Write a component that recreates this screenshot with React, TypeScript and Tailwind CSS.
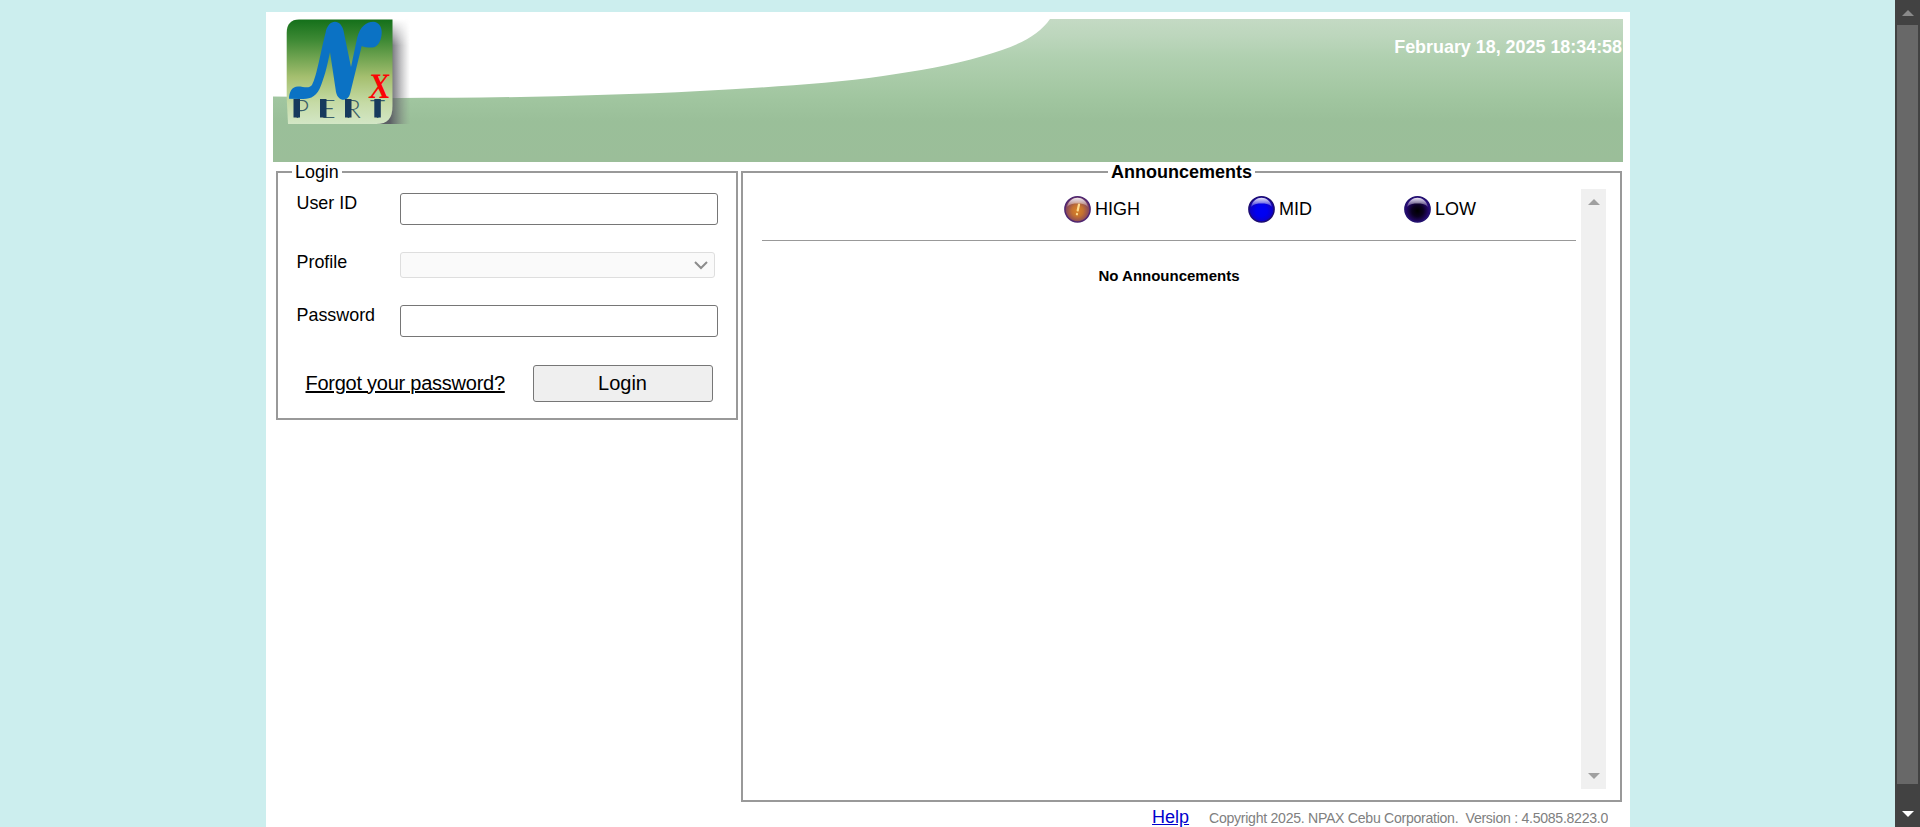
import React from "react";

function Logo() {
  return (
    <svg className="absolute left-[9px] top-0 h-[106px] w-[132px]" viewBox="0 0 132 106" aria-hidden="true">
      <defs>
        <linearGradient id="tile" x1="0" y1="0" x2="0" y2="1">
          <stop offset="0" stopColor="#14701a" />
          <stop offset="0.2" stopColor="#3f8a35" />
          <stop offset="0.55" stopColor="#a5bf6f" />
          <stop offset="0.8" stopColor="#c6dba6" />
          <stop offset="1" stopColor="#d3e6c6" />
        </linearGradient>
        <linearGradient id="shade" gradientUnits="userSpaceOnUse" x1="108" y1="0" x2="128" y2="0">
          <stop offset="0" stopColor="#55555f" stopOpacity="0.9" />
          <stop offset="0.4" stopColor="#66666c" stopOpacity="0.55" />
          <stop offset="1" stopColor="#888888" stopOpacity="0" />
        </linearGradient>
        <linearGradient id="fadeTop" x1="0" y1="0" x2="0" y2="1">
          <stop offset="0" stopColor="#000" />
          <stop offset="0.25" stopColor="#fff" />
        </linearGradient>
        <mask id="shadeMask">
          <rect width="132" height="106" fill="url(#fadeTop)" />
        </mask>
      </defs>
      <path d="M98 0H129V105H94L98 90Z" fill="url(#shade)" mask="url(#shadeMask)" />
      <path d="M17 0.500H110.500V87C110.500 99 106 105 94 105H6L4.700 79V14C4.700 5 9 0.500 17 0.500Z" fill="url(#tile)" />
      <path
        d="M7 79.700C7 73 10 67.500 16 67.500C22 67.500 27 70 30 66C35 57 39 31 43.500 14C46 -1 60 -1 62 14L69 48L75.300 18.300C78 8 84 3 91.300 2.800C97 3 100 8 99.700 14C99.500 21 96 28.500 90 28.500C85 28.500 82 28 79.700 27L68 75C66 83 56 83 54 73L48 33C45 48 42 60 37.500 70C33 79 27 80 18 80Z"
        fill="#0b72c4"
      />
      <text x="93" y="79.500" transform="skewX(-5)" fill="#fb0505" fontSize="36" fontWeight="bold" fontFamily="Liberation Serif, serif" textLength="21" lengthAdjust="spacingAndGlyphs">X</text>
      <g fill="#3a5f68" fontSize="26" fontWeight="300" fontFamily="Lato, sans-serif">
        <text x="12" y="98.500">P</text>
        <text x="38.500" y="98.500">E</text>
        <text x="63" y="98.500">R</text>
        <text x="88" y="98.500">T</text>
      </g>
      <g fill="#173a5d">
        <rect x="11.500" y="80" width="6.500" height="18.500" />
        <rect x="38" y="80" width="6.500" height="18.500" />
        <rect x="63" y="80" width="6.500" height="18.500" />
        <rect x="92.300" y="80" width="6.500" height="18.500" />
      </g>
    </svg>
  );
}

function Banner() {
  return (
    <header className="relative flex h-[143px] w-[1350px] justify-end bg-[linear-gradient(to_bottom,#c4dac4_0px,#bcd6bc_18px,#b0d0b0_38px,#a9cba8_58px,#a1c6a0_78px,#9abf99_102px,#9bbe99_143px)] pr-px">
      <svg className="absolute left-0 top-0 h-[143px] w-[1350px]" viewBox="0 0 1350 143" aria-hidden="true">
        <path d="M0 0H777C765 17 745 27 710 37C677 46.500 645 52 610 57C555 65 490 68.500 427 72C330 77 220 79 125 79L0 77.500Z" fill="#fff" />
      </svg>
      <Logo />
      <span className="relative mt-[18px] text-[17.9px] font-bold leading-5 text-white">February 18, 2025 18:34:58</span>
    </header>
  );
}

function Field({ label, children, className }: { label: string; children: React.ReactNode; className: string }) {
  return (
    <div className={"flex items-start " + className}>
      <label className="w-[103.500px] text-[17.9px] leading-5">{label}</label>
      {children}
    </div>
  );
}

function LoginBox() {
  return (
    <fieldset className="h-[258px] w-[462px] border-2 border-[#999] pl-[14px]">
      <legend className="h-5 px-[3px] text-[17.9px] leading-5">Login</legend>
      <div className="pl-[4.500px] pt-[11px]">
        <Field label="User ID" className="h-[59px]">
          <input className="h-8 w-[318px] rounded-[3px] border border-[#767676] bg-white px-1" />
        </Field>
        <Field label="Profile" className="h-[53px]">
          <button disabled className="flex h-[26px] w-[315px] items-center justify-end rounded-[3px] border border-[#dedede] bg-[#fafafa] pr-[5px]">
            <svg className="h-4 w-4" viewBox="0 0 16 16" fill="none" stroke="#8c8c8c" strokeWidth="2">
              <path d="M2 5L8 11L14 5" />
            </svg>
          </button>
        </Field>
        <Field label="Password" className="h-[60px]">
          <input type="password" className="h-8 w-[318px] rounded-[3px] border border-[#767676] bg-white px-1" />
        </Field>
        <div className="flex h-[37px] items-center pl-[9px]">
          <a href="#" className="w-[227px] pb-[2px] text-[20px] leading-6 tracking-[-0.25px] underline">Forgot your password?</a>
          <button className="h-[37px] w-[180px] rounded-[3px] border border-[#767676] bg-[#efefef] pb-[2px] text-[20px] leading-6">Login</button>
        </div>
      </div>
    </fieldset>
  );
}

function Orb({ kind }: { kind: "high" | "mid" | "low" }) {
  const tones = {
    high: { core: "#d98428", mid: "#c47130", edge: "#7a3f66", ring: "#4f2670" },
    mid: { core: "#0000f4", mid: "#0000f0", edge: "#1200b8", ring: "#1c0c72" },
    low: { core: "#000000", mid: "#0a0020", edge: "#2c0a80", ring: "#22106e" },
  }[kind];
  return (
    <svg className="h-7 w-7" viewBox="0 0 28 28" aria-hidden="true">
      <defs>
        <radialGradient id={"orb-" + kind} cx="0.5" cy="0.56" r="0.5">
          <stop offset="0" stopColor={tones.core} />
          <stop offset="0.45" stopColor={tones.mid} />
          <stop offset="1" stopColor={tones.edge} />
        </radialGradient>
        <linearGradient id={"gloss-" + kind} x1="0" y1="0" x2="0" y2="1">
          <stop offset="0" stopColor="#fff" stopOpacity="0.9" />
          <stop offset="1" stopColor="#fff" stopOpacity="0.15" />
        </linearGradient>
      </defs>
      <circle cx="13.500" cy="14.300" r="12.600" fill={"url(#orb-" + kind + ")"} stroke={tones.ring} strokeWidth="1.500" />
      <path d="M3 12C4.500 5.500 9 2.800 13.500 2.800S22.500 5.500 24 12C21 8.800 17 8.500 13.500 8.500S6 8.800 3 12Z" fill={"url(#gloss-" + kind + ")"} />
      {kind === "high" && (
        <g stroke="#ffdc90" strokeWidth="2.200" strokeLinecap="round">
          <path d="M15 9.500L13.700 15.500" />
          <path d="M13 19L12.900 19.300" />
        </g>
      )}
    </svg>
  );
}

function Level({ kind, label, className }: { kind: "high" | "mid" | "low"; label: string; className: string }) {
  return (
    <div className={"flex items-center gap-[3px] " + className}>
      <Orb kind={kind} />
      <span className="text-[18px] leading-5">{label}</span>
    </div>
  );
}

function Announcements() {
  return (
    <fieldset className="h-[640px] w-[881px] border-2 border-[#999]">
      <legend className="mx-auto h-5 px-[3px] text-[18px] font-bold leading-5">Announcements</legend>
      <div className="flex pl-[19px] pt-[7px]">
        <div className="w-[814px]">
          <div className="flex h-[51px] pl-[302px] pt-[6px]">
            <Level kind="high" label="HIGH" className="h-7 w-[184px]" />
            <Level kind="mid" label="MID" className="h-7 w-[156px]" />
            <Level kind="low" label="LOW" className="h-7" />
          </div>
          <div className="h-px bg-[#999]" />
          <p className="pt-[25px] text-center text-[15px] font-bold leading-5">No Announcements</p>
        </div>
        <div className="ml-[5px] flex h-[600px] w-[25px] flex-col items-center justify-between bg-[#f0f0f0] py-[10px]">
          <svg className="h-[6px] w-3" viewBox="0 0 12 6" fill="#a0a0a0"><path d="M0 6L6 0L12 6Z" /></svg>
          <svg className="h-[6px] w-3" viewBox="0 0 12 6" fill="#a0a0a0"><path d="M0 0L6 6L12 0Z" /></svg>
        </div>
      </div>
    </fieldset>
  );
}

export default function App() {
  return (
    <div className="flex h-[827px] w-[1920px] overflow-hidden bg-[#cceeee] font-['Liberation_Sans',Arial,sans-serif] text-black">
      <div className="flex flex-1 pl-[266px] pt-3">
        <main className="h-[815px] w-[1364px] bg-white pl-[7px] pt-[7px]">
          <Banner />
          <div className="flex items-start gap-[3px] pl-[3px]">
            <LoginBox />
            <Announcements />
          </div>
          <footer className="flex h-[25px] w-[1335px] items-start justify-end gap-[20px] overflow-hidden pt-[5px]">
            <a href="#" className="text-[18px] leading-5 text-[#0000cc] underline">Help</a>
            <span className="whitespace-pre pt-[2px] text-[14.100px] leading-[18px] tracking-[-0.28px] text-[#808080]">{"Copyright 2025. NPAX Cebu Corporation.  Version : 4.5085.8223.0"}</span>
          </footer>
        </main>
      </div>
      <div className="flex h-full w-[25px] flex-col items-center bg-[#424242]">
        <div className="flex h-[25px] items-center"><svg className="h-[6px] w-3" viewBox="0 0 12 6" fill="#8a8a8a"><path d="M0 6L6 0L12 6Z" /></svg></div>
        <div className="h-[759px] w-[21px] bg-[#686868]" />
        <svg className="mt-[27px] h-[6px] w-3" viewBox="0 0 12 6" fill="#fff"><path d="M0 0L6 6L12 0Z" /></svg>
      </div>
    </div>
  );
}
